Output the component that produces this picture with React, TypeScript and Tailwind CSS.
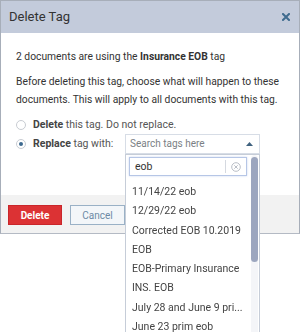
import { useState } from "react";

const tags = [
  "11/14/22 eob",
  "12/29/22 eob",
  "Corrected EOB 10.2019",
  "EOB",
  "EOB-Primary Insurance",
  "INS. EOB",
  "July 28 and June 9 pri...",
  "June 23 prim eob",
];

function Radio({ checked }: { checked: boolean }) {
  return (
    <span className="w-[10px] h-[10px] rounded-full border border-[#c8ccd2] bg-white flex items-center justify-center shrink-0">
      {checked && <span className="w-[4px] h-[4px] rounded-full bg-[#3d6a8f]" />}
    </span>
  );
}

export default function App() {
  const [query, setQuery] = useState("eob");
  const [mode, setMode] = useState("replace");

  return (
    <div className="w-[300px] h-[332px] bg-white relative overflow-hidden font-['Roboto',sans-serif] text-[#333]">
      <div className="w-[300px] border border-[#a7aeb9] border-b-[#b4bac4]">
        <div className="h-[32px] bg-[#c3cbdb] flex items-center justify-between pl-[8px] pr-[8px]">
          <h1 className="text-[13px] text-[#333]">Delete Tag</h1>
          <svg width="8" height="8" viewBox="0 0 8 8" className="mr-[1px]">
            <path d="M1 1L7 7M7 1L1 7" stroke="#3f6b8e" strokeWidth="2" strokeLinecap="square" />
          </svg>
        </div>

        <div className="px-[15px] pt-[15px] pb-[41px] text-[10.3px] leading-[18px]">
          <p>
            2 documents are using the <b className="font-bold">Insurance EOB</b> tag
          </p>
          <p className="mt-[7px]">
            Before deleting this tag, choose what will happen to these documents. This will apply to all
            documents with this tag.
          </p>

          <div className="mt-[7px] text-[#555] text-[10.5px] flex flex-col">
            <label className="flex items-center gap-[7px] h-[18px]" onClick={() => setMode("delete")}>
              <Radio checked={mode === "delete"} />
              <span>
                <b className="font-bold text-[#444]">Delete</b> this tag. Do not replace.
              </span>
            </label>
            <div className="flex items-center h-[20px]">
              <label className="flex items-center gap-[7px] w-[109px]" onClick={() => setMode("replace")}>
                <Radio checked={mode === "replace"} />
                <span>
                  <b className="font-bold text-[#444]">Replace</b> tag with:
                </span>
              </label>
              <div className="w-[135px] h-[20px] border border-[#d7dde6] flex items-center justify-between pl-[4px] pr-[6px] text-[#7b7f85] text-[10px]">
                <span>Search tags here</span>
                <svg width="7" height="4" viewBox="0 0 7 4">
                  <path d="M3.5 0L7 4H0Z" fill="#40627f" />
                </svg>
              </div>
            </div>
          </div>
        </div>

        <div className="h-[38px] bg-[#f2f2f2] flex items-start gap-[8px] px-[7px] pt-[10px]">
          <button className="w-[54px] h-[20px] bg-[#dc3234] border border-[#c9262a] text-white text-[10px] font-bold">
            Delete
          </button>
          <button className="w-[55px] h-[20px] bg-[#f3f6f9] border border-[#9ab1c6] text-[#6d8aa5] text-[10px]">
            Cancel
          </button>
        </div>
      </div>

      <div className="absolute left-[125px] top-[154px] w-[135px] h-[190px] bg-white border border-[#c6cdd8] flex">
        <div className="flex-1 min-w-0 pt-[2px]">
          <div className="ml-[3px] mr-[4px] h-[19px] border border-[#b6c6e6] shadow-[0_0_2px_#c9d6f0] flex items-center">
            <input
              autoFocus
              value={query}
              onChange={(e) => setQuery(e.target.value)}
              className="flex-1 min-w-0 h-full pl-[5px] text-[10.5px] text-[#333] outline-none bg-transparent"
            />
            <span className="w-px h-[13px] bg-[#d5d9e0]" />
            <svg width="10" height="10" viewBox="0 0 10 10" className="mx-[5px]">
              <circle cx="5" cy="5" r="4.3" fill="none" stroke="#b9bec6" strokeWidth="1" />
              <path d="M3.3 3.3L6.7 6.7M6.7 3.3L3.3 6.7" stroke="#b9bec6" strokeWidth="1" />
            </svg>
          </div>
          <ul className="mt-[6px] text-[10.5px] leading-[19.3px] text-[#444] pl-[6px]">
            {tags.map((t) => (
              <li key={t} className="whitespace-nowrap">
                {t}
              </li>
            ))}
          </ul>
        </div>
        <div className="w-[7px] mr-[1px] pt-[2px] bg-[#f4f5f8] rounded-full">
          <div className="h-[105px] bg-[#9ca6bf] rounded-full" />
        </div>
      </div>
    </div>
  );
}
